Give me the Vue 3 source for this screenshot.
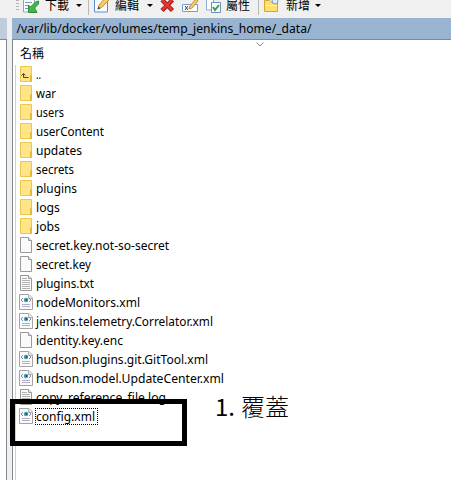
<script setup>
const rows = [
  ['up', '..', 5], ['dir', 'war', 20], ['dir', 'users', 28], ['dir', 'userContent', 68],
  ['dir', 'updates', 46], ['dir', 'secrets', 38], ['dir', 'plugins', 41], ['dir', 'logs', 24],
  ['dir', 'jobs', 24], ['file', 'secret.key.not-so-secret', 133], ['file', 'secret.key', 55],
  ['txt', 'plugins.txt', 58], ['xml', 'nodeMonitors.xml', 104],
  ['xml', 'jenkins.telemetry.Correlator.xml', 177], ['file', 'identity.key.enc', 87],
  ['xml', 'hudson.plugins.git.GitTool.xml', 172], ['xml', 'hudson.model.UpdateCenter.xml', 188],
  ['txt', 'copy_reference_file.log', 130], ['xml', 'config.xml', 59],
].map(([kind, name, width]) => ({ kind, name, width }))
</script>

<template>
  <div class="window">
    <header class="toolbar">
      <svg width="451" height="18">
        <path d="M16 0h3v1h-3zM16 3h3v1h-3zM16 6h3v1h-3zM16 9h3v1h-3z" fill="#b5b5b5" />
        <path d="M23.500-2h11v14h-11z" fill="#f7fafd" stroke="#8ba8c5" />
        <path d="M25 2.500h7M25 5.500h4M25 8.500h3" stroke="#7e9abb" />
        <path d="M38.500 1v3l-4 4 2.500 4.500h-8.500V5l2 2 5-5z" fill="#43b649" stroke="#2f8f35" />
        <text x="45" y="10" textLength="24">下載</text>
        <path d="M76 4h6l-3 3z" />
        <path d="M88.500 0v15M258.500 0v15" stroke="#b8b8b8" />
        <path d="M94.500-2h13v14h-13z" fill="#f8fbff" stroke="#5c8fca" />
        <path d="M98 9l1-4 7-8 3 3-7 7z" fill="#f7cd62" stroke="#c08f3f" />
        <path d="M97.500 9.500l1-3 2 2z" fill="#444" />
        <text x="115" y="10" textLength="24">編輯</text>
        <path d="M147 4h6l-3 3z" />
        <path d="M162 0l10.500 10.500M172.500 0l-10.500 10.500" stroke="#a51d1d" stroke-width="4.500" />
        <path d="M162 0l10 10M172 0l-10 10" stroke="#e03431" stroke-width="2.700" />
        <path d="M182.500 4.500h15v7h-15z" fill="#fff" stroke="#7b9bc6" />
        <path d="M185 6l3 4M188 6l-3 4" stroke="#345" />
        <path d="M189 9l1-3 6-7 2 2-6 7z" fill="#f7cd62" stroke="#c08f3f" />
        <path d="M206.500-2h7v12h-7z" fill="#fafdff" stroke="#8daed0" />
        <path d="M211.500 2.500h9v10h-9z" fill="#fff" stroke="#6c91bd" />
        <path d="M213 7l2 3 4-5" fill="none" stroke="#35a34b" stroke-width="2" />
        <text x="226" y="10" textLength="24">屬性</text>
        <path d="M264.500 0.500h5l2 2h6v9h-13z" fill="#ffdf70" stroke="#d8a62c" />
        <path d="M265 5.500h12" stroke="#fff1ad" />
        <circle cx="275" cy="1" r="3" fill="#dce9f6" stroke="#7796ba" />
        <text x="286" y="10" textLength="24">新增</text>
        <path d="M315 4h6l-3 3z" />
      </svg>
    </header>
    <main class="panes">
      <aside class="left"><div class="left-path"></div><div class="left-body"></div></aside>
      <section class="right">
        <div class="path"><svg width="310" height="21"><text x="4.500" y="15" textLength="295" lengthAdjust="spacingAndGlyphs">/var/lib/docker/volumes/temp_jenkins_home/_data/</text></svg></div>
        <div class="body">
          <div class="heading">
            <span>名稱</span>
            <svg class="sort" width="8" height="5"><path d="M.5.500l3.500 3.500 3.500-3.500" fill="none" stroke="#888" /></svg>
          </div>
          <div class="list">
            <div v-for="row in rows" :key="row.name" class="row">
              <svg class="icon" width="16" height="19">
                <template v-if="row.kind === 'dir' || row.kind === 'up'">
                  <path d="M1.500 1.500h11v15h-11z" fill="#ffe488" stroke="#edc64b" />
                  <path d="M11.500 10.500h1v6h-1z" fill="#ffe591" stroke="#e6b932" />
                  <path v-if="row.kind === 'up'" d="M4.500 9v3.500h5M2.500 10.500l2-2 2 2" fill="none" stroke="#444" />
                </template>
                <template v-else-if="row.kind === 'xml'">
                  <path d="M.5 1.500h9.500l3.500 3.500v11.500h-13z" fill="#fafafa" stroke="#a3a3a3" />
                  <path d="M9.500 1.500v4h4" fill="#e5e5e5" stroke="#b5b5b5" />
                  <path d="M4 5L2 7l2 2M10 5l2 2-2 2" fill="none" stroke="#7d8fa8" />
                  <circle cx="7" cy="7" r="2.200" fill="#3ba3b3" /><circle cx="7.500" cy="7" r="1" fill="#235179" />
                  <path d="M3 11.500h8M3 13.500h8" stroke="#b0b0c8" />
                </template>
                <template v-else>
                  <path d="M1.500 1.500h8l3 3v12h-11z" fill="#fafafa" stroke="#999" />
                  <path d="M9.500 1.500v3h3" fill="#eee" stroke="#999" />
                  <path v-if="row.kind === 'txt'" d="M3 4.500h5M3 6.500h8M3 8.500h8M3 10.500h8M3 12.500h8M3 14.500h8" stroke="#b0b0b0" />
                </template>
              </svg>
              <svg class="name" :width="row.width + 2" height="19"><text x="0" y="14" :textLength="row.width" lengthAdjust="spacingAndGlyphs">{{ row.name }}</text></svg>
              <i v-if="row.name === 'config.xml'" class="focus"></i>
            </div>
          </div>
        </div>
      </section>
    </main>
    <div class="marker"></div>
    <svg class="note" width="80" height="34"><text class="number" x="0" y="25" textLength="20">1.</text><text x="26" y="25" textLength="48">覆蓋</text></svg>
  </div>
</template>

<style>body { overflow: hidden; }</style>
<style scoped>
.window { position: relative; width: 451px; height: 480px; overflow: hidden; background: #f0f0f0; color: #000; font: 12.5px "Noto Sans", "Noto Sans CJK TC", sans-serif; }
svg { display: block; flex: none; }
.toolbar { height: 18px; font: 12px "Noto Sans CJK TC", sans-serif; }
.panes { display: flex; gap: 5px; height: 462px; }
.left { width: 7px; }
.left-path { height: 21px; background: #bfcddb; }
.left-body { height: 441px; background: #fff; border: solid #828790; border-width: 1px 1px 0 0; box-sizing: border-box; }
.right { flex: 1; min-width: 0; }
.path { height: 21px; background: #99b4d1; font-size: 13px; }
.body { height: 441px; box-sizing: border-box; border: solid #828790; border-width: 1px 0 0 1px; background: #fff; }
.heading { position: relative; height: 25px; box-sizing: border-box; padding: 4px 0 0 7px; font: 12px/17px "Noto Sans CJK TC", sans-serif; }
.sort { position: absolute; left: 243px; top: 2px; }
.list { margin-left: 2px; border-left: 1px solid #b9d7f5; height: 415px; }
.row { position: relative; display: flex; height: 19px; padding-left: 3px; }
.name { margin-left: 1px; overflow: visible; }
.focus { position: absolute; left: 19px; top: 1px; width: 61px; height: 15px; border: 1px dotted #000; }
.marker { position: absolute; left: 10px; top: 399px; width: 167px; height: 37px; border: 5px solid #000; }
.note { position: absolute; left: 215px; top: 391px; font: 24px "Noto Sans CJK TC", sans-serif; font-weight: 300; }
.number { font-weight: 400; }
</style>
